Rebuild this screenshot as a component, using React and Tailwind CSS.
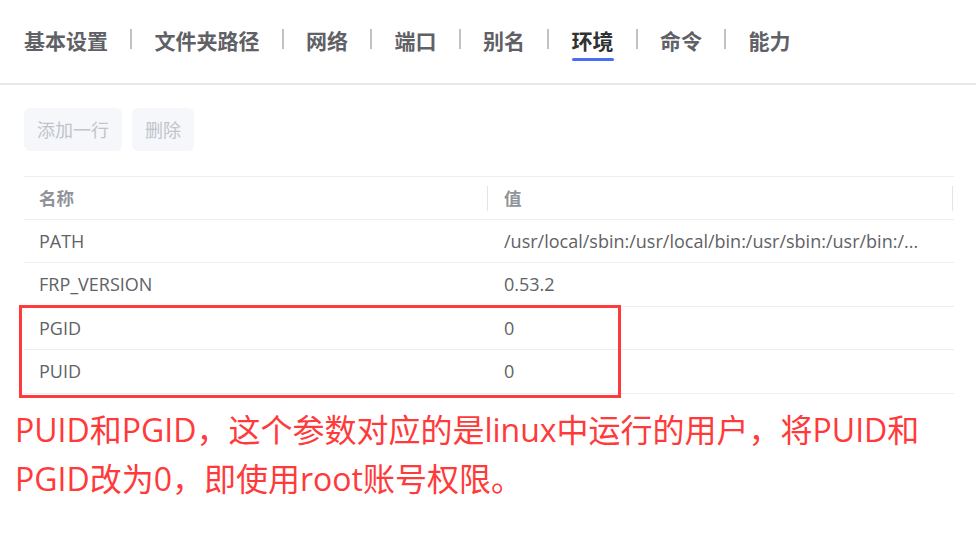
import React from "react";

const tabs = ["基本设置", "文件夹路径", "网络", "端口", "别名", "环境", "命令", "能力"];
const ACTIVE = 5;

const rows = [
  { k: "PATH", v: "/usr/local/sbin:/usr/local/bin:/usr/sbin:/usr/bin:/...", h: "h-[43px]" },
  { k: "FRP_VERSION", v: "0.53.2", h: "h-[44px]" },
  { k: "PGID", v: "0", h: "h-[43px]" },
  { k: "PUID", v: "0", h: "h-[44px]" },
];

export default function App() {
  return (
    <div className="relative w-[976px] h-[537px] overflow-hidden bg-white font-['Open_Sans','Noto_Sans_CJK_SC',sans-serif]">
      {/* Tab bar */}
      <div className="h-[85px] border-b-2 border-[#e6e8eb] flex items-start pl-[24px] pt-[26px]">
        {tabs.map((t, i) => (
          <React.Fragment key={t}>
            {i > 0 && <div className="mx-[22.25px] mt-[3px] h-[20px] w-[2px] bg-[#c2c2c2]" />}
            <div className="flex flex-col">
              <span
                className={
                  "text-[21px] leading-[28px] font-bold font-['Noto_Sans_CJK_SC',sans-serif] " +
                  (i === ACTIVE ? "text-[#303133]" : "text-[#5f6166]")
                }
              >
                {t}
              </span>
              {i === ACTIVE && <div className="mt-[4px] h-[3px] rounded-full bg-[#4a6cf7]" />}
            </div>
          </React.Fragment>
        ))}
      </div>

      {/* Buttons */}
      <div className="mt-[23px] ml-[24px] flex gap-[10px]">
        <div className="h-[43px] w-[98px] rounded-[6px] bg-[#f5f7fa] flex items-center justify-center text-[18px] text-[#c0c4cc] font-['Noto_Sans_CJK_SC',sans-serif]">
          添加一行
        </div>
        <div className="h-[43px] w-[62px] rounded-[6px] bg-[#f5f7fa] flex items-center justify-center text-[18px] text-[#c0c4cc] font-['Noto_Sans_CJK_SC',sans-serif]">
          删除
        </div>
      </div>

      {/* Table */}
      <div className="mt-[25px] mx-[24px] w-[930px] border-t border-[#ebeef5] text-[18px]">
        <div className="grid grid-cols-2 h-[43px] border-b border-[#ebeef5]">
          <div className="flex items-center justify-between pl-[15px] pr-[1px]">
            <span className="font-semibold text-[17.5px] text-[#909399] font-['Noto_Sans_CJK_SC',sans-serif]">名称</span>
            <div className="h-[25px] w-px bg-[#e4e4e4]" />
          </div>
          <div className="flex items-center justify-between pl-[15px] pr-[1px]">
            <span className="font-semibold text-[17.5px] text-[#909399] font-['Noto_Sans_CJK_SC',sans-serif]">值</span>
            <div className="h-[25px] w-px bg-[#e4e4e4]" />
          </div>
        </div>
        {rows.map((r) => (
          <div key={r.k} className={"grid grid-cols-2 border-b border-[#ebeef5] text-[#606266] " + r.h}>
            <div className="flex items-center px-[15px]">{r.k}</div>
            <div className="flex items-center px-[15px] whitespace-nowrap overflow-hidden">{r.v}</div>
          </div>
        ))}
      </div>

      {/* Annotation */}
      <div className="absolute left-[19px] top-[305px] w-[602px] h-[93px] border-[3px] border-[#ff3a3a]" />
      <p className="mt-[11px] pl-[15px] text-[32px] leading-[49px] text-[#ff3a3a]">
        PUID和PGID，这个参数对应的是linux中运行的用户，将PUID和
        <br />
        PGID改为0，即使用root账号权限。
      </p>
    </div>
  );
}
